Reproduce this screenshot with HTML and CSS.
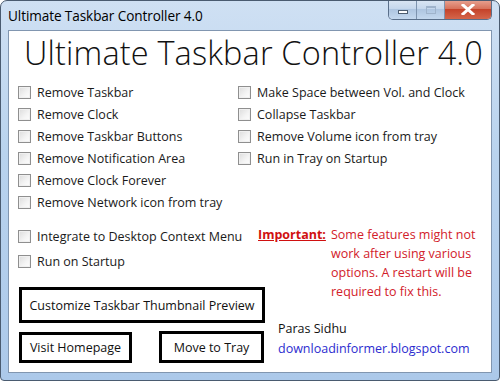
FILE: index.html
```html
<!DOCTYPE html>
<html>
<head>
<meta charset="utf-8">
<link rel="stylesheet" href="styles.css">
</head>
<body>
<div class="window">
  <div class="titlebar">
    <span class="title">Ultimate Taskbar Controller 4.0</span>
    <div class="caption">
      <div class="cbtn min"><span class="min-glyph"></span></div>
      <div class="cbtn max"><span class="max-glyph"></span></div>
      <div class="cbtn close"><svg width="14" height="11" viewBox="0 0 14 11"><path d="M2 1 L12 10 M12 1 L2 10" stroke="#fff" stroke-width="3" stroke-linecap="square"/></svg></div>
    </div>
  </div>
  <div class="client">
    <h1 class="heading">Ultimate Taskbar Controller 4.0</h1>
    <div class="options">
      <div class="col">
        <label class="opt"><span class="box"></span>Remove Taskbar</label>
        <label class="opt"><span class="box"></span>Remove Clock</label>
        <label class="opt"><span class="box"></span>Remove Taskbar Buttons</label>
        <label class="opt"><span class="box"></span>Remove Notification Area</label>
        <label class="opt"><span class="box"></span>Remove Clock Forever</label>
        <label class="opt"><span class="box"></span>Remove Network icon from tray</label>
      </div>
      <div class="col">
        <label class="opt"><span class="box"></span>Make Space between Vol. and Clock</label>
        <label class="opt"><span class="box"></span>Collapse Taskbar</label>
        <label class="opt"><span class="box"></span>Remove Volume icon from tray</label>
        <label class="opt"><span class="box"></span>Run in Tray on Startup</label>
      </div>
    </div>
    <div class="lower">
      <div class="lower-left">
        <label class="opt"><span class="box"></span>Integrate to Desktop Context Menu</label>
        <label class="opt opt2"><span class="box"></span>Run on Startup</label>
        <div class="btn wide">Customize Taskbar Thumbnail Preview</div>
        <div class="btnrow">
          <div class="btn visit">Visit Homepage</div>
          <div class="btn tray">Move to Tray</div>
        </div>
      </div>
      <div class="lower-right">
        <div class="important">
          <span class="imp-label">Important:</span>
          <span class="imp-text">Some features might not work after using various options. A restart will be required to fix this.</span>
        </div>
        <div class="author">Paras Sidhu</div>
        <div class="link">downloadinformer.blogspot.com</div>
      </div>
    </div>
  </div>
</div>
</body>
</html>
```

FILE: styles.css
```css
* { box-sizing: border-box; }
html, body { margin: 0; padding: 0; background: #fff; }
body { font-family: "Open Sans", "Noto Sans", sans-serif; }

.window {
  width: 500px;
  height: 381px;
  border: 1px solid #4a5b70;
  border-radius: 7px 7px 4px 4px;
  background: linear-gradient(180deg, #cfe0f3 0%, #b9d3ee 40%, #acc9ea 100%);
  display: flex;
  flex-direction: column;
  overflow: hidden;
}

.titlebar {
  height: 29px;
  display: flex;
  align-items: flex-start;
  justify-content: space-between;
  padding-left: 7px;
}
.title {
  font-family: "Open Sans", sans-serif;
  font-size: 13.6px;
  color: #000;
  margin-top: 5px;
  letter-spacing: -0.1px;
}
.caption {
  display: flex;
  margin-right: 7px;
  margin-top: -1px;
  height: 20px;
  border: 1px solid #5a6f8a;
  border-top: none;
  border-radius: 0 0 5px 5px;
  overflow: hidden;
}
.cbtn {
  height: 19px;
  display: flex;
  align-items: center;
  justify-content: center;
}
.min, .max {
  width: 28px;
  background: linear-gradient(180deg, #dbe6f3 0%, #c5d7ec 45%, #aec5e0 50%, #c4d8ee 100%);
  border-right: 1px solid #7d93ae;
}
.min-glyph {
  display: block;
  width: 10px;
  height: 4px;
  background: #fff;
  border: 1px solid #4d5d70;
  margin-top: 5px;
}
.max-glyph {
  display: block;
  width: 10px;
  height: 8px;
  border: 1px solid #9fb3cb;
  border-top-width: 2px;
  background: transparent;
}
.close {
  width: 46px;
  background: linear-gradient(180deg, #e8a493 0%, #d7735c 45%, #c5432a 50%, #d4664b 100%);
}

.client {
  margin: 0 7px 7px 7px;
  flex: 1;
  background: #fff;
  border: 1px solid #8196b0;
  padding: 0 0 0 9px;
}

.heading {
  margin: 0;
  font-family: "Open Sans", sans-serif;
  font-weight: 300;
  font-size: 32.5px;
  line-height: 44px;
  color: #111;
  padding-left: 6px;
  letter-spacing: 0.15px;
  height: 50px;
}

.options {
  display: grid;
  grid-template-columns: 220px 1fr;
}
.col { display: flex; flex-direction: column; }
.opt {
  display: flex;
  align-items: center;
  height: 22px;
  font-size: 12.5px;
  color: #1a1a1a;
  white-space: nowrap;
}
.box {
  width: 13px;
  height: 13px;
  border: 1px solid #8f8f8f;
  background: linear-gradient(135deg, #dcdcdc 0%, #f4f4f4 60%, #fdfdfd 100%);
  box-shadow: inset 0 0 0 1px #f0f0f0;
  margin-right: 6px;
  flex: none;
}

.lower {
  display: grid;
  grid-template-columns: 240px 1fr;
  margin-top: 12px;
}
.lower-left { display: flex; flex-direction: column; }
.opt2 { margin-top: 3px; }

.btn {
  border: 3px solid #000;
  font-size: 12.5px;
  color: #111;
  display: flex;
  align-items: center;
  justify-content: center;
  white-space: nowrap;
}
.wide {
  width: 246px;
  height: 36px;
  margin-top: 15px;
  margin-left: 1px;
}
.btnrow {
  display: flex;
  justify-content: space-between;
  align-items: flex-start;
  margin-top: 8px;
  width: 245px;
  margin-left: 1px;
}
.visit { width: 113px; height: 31px; margin-top: 1px; }
.tray { width: 105px; height: 32px; }

.important {
  display: flex;
  font-size: 12.5px;
  line-height: 19px;
  color: #d2202a;
}
.imp-label {
  font-weight: 700;
  text-decoration: underline;
  flex: none;
  width: 73px;
  color: #d01010;
}
.imp-text { width: 160px; }
.author {
  font-size: 12.5px;
  color: #111;
  margin-top: 19px;
  margin-left: 20px;
  line-height: 18px;
}
.link {
  font-size: 12.5px;
  color: #2c2ccf;
  margin-top: 2px;
  margin-left: 20px;
  line-height: 18px;
}
```
